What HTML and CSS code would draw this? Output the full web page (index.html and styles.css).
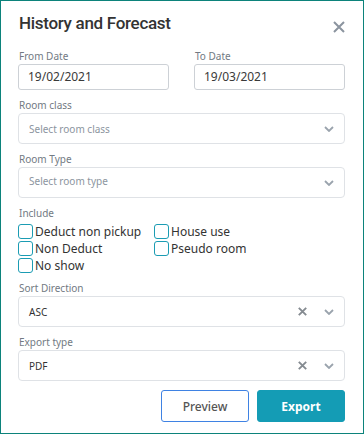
FILE: index.html
```html
<!DOCTYPE html>
<html>
<head>
<meta charset="utf-8">
<link rel="stylesheet" href="styles.css">
</head>
<body>
<div class="modal">
  <div class="header">
    <h1 class="title">History and Forecast</h1>
    <svg class="close" width="12" height="12" viewBox="0 0 12 12"><path d="M1 1L11 11M11 1L1 11" stroke="#8b949f" stroke-width="2" fill="none"/></svg>
  </div>
  <div class="row2">
    <div class="field">
      <label class="label">From Date</label>
      <div class="input">19/02/2021</div>
    </div>
    <div class="field">
      <label class="label">To Date</label>
      <div class="input">19/03/2021</div>
    </div>
  </div>
  <div class="field">
    <label class="label">Room class</label>
    <div class="select"><span class="ph">Select room class</span>
      <svg class="chev" width="10" height="6" viewBox="0 0 10 6"><path d="M1 1L5 5L9 1" stroke="#9aa3ad" stroke-width="1.8" fill="none"/></svg>
    </div>
  </div>
  <div class="field">
    <label class="label">Room Type</label>
    <div class="select"><span class="ph up">Select room type</span>
      <svg class="chev" width="10" height="6" viewBox="0 0 10 6"><path d="M1 1L5 5L9 1" stroke="#9aa3ad" stroke-width="1.8" fill="none"/></svg>
    </div>
  </div>
  <div class="field">
    <label class="label">Include</label>
    <div class="checks">
      <div class="check"><span class="box"></span>Deduct non pickup</div>
      <div class="check"><span class="box"></span>House use</div>
      <div class="check"><span class="box"></span>Non Deduct</div>
      <div class="check"><span class="box"></span>Pseudo room</div>
      <div class="check"><span class="box"></span>No show</div>
    </div>
  </div>
  <div class="field">
    <label class="label">Sort Direction</label>
    <div class="select"><span class="val">ASC</span>
      <svg class="clr" width="9" height="9" viewBox="0 0 9 9"><path d="M0.8 0.8L8.2 8.2M8.2 0.8L0.8 8.2" stroke="#858b91" stroke-width="1.9" fill="none"/></svg>
      <svg class="chev" width="10" height="6" viewBox="0 0 10 6"><path d="M1 1L5 5L9 1" stroke="#9aa3ad" stroke-width="1.8" fill="none"/></svg>
    </div>
  </div>
  <div class="field">
    <label class="label">Export type</label>
    <div class="select"><span class="val">PDF</span>
      <svg class="clr" width="9" height="9" viewBox="0 0 9 9"><path d="M0.8 0.8L8.2 8.2M8.2 0.8L0.8 8.2" stroke="#858b91" stroke-width="1.9" fill="none"/></svg>
      <svg class="chev" width="10" height="6" viewBox="0 0 10 6"><path d="M1 1L5 5L9 1" stroke="#9aa3ad" stroke-width="1.8" fill="none"/></svg>
    </div>
  </div>
  <div class="actions">
    <button class="btn preview">Preview</button>
    <button class="btn export">Export</button>
  </div>
</div>
</body>
</html>
```
FILE: styles.css
```css
* { box-sizing: border-box; }
html, body { margin: 0; padding: 0; background: #fff; }
body { font-family: "Noto Sans", "Open Sans", sans-serif; color: #333; }
.modal {
  width: 364px; height: 434px;
  border: 1px solid #0c837b;
  padding: 0 18px 0 17px;
  display: flex; flex-direction: column;
}
.header {
  display: flex; justify-content: space-between; align-items: flex-start;
  height: 48px;
}
.title {
  margin: 10px 0 0 1px; font-family: Roboto, "Noto Sans", sans-serif;
  font-size: 17px; font-weight: 500; color: #333;
  line-height: 24px; letter-spacing: -0.3px;
}
.close { margin-top: 20px; margin-right: 0; }
.row2 { display: grid; grid-template-columns: 1fr 1fr; column-gap: 25px; }
.field { display: flex; flex-direction: column; margin-bottom: 8px; }
.label {
  font-size: 10px; line-height: 15px; color: #727a83; padding-left: 1px;
}
.input {
  height: 26px; border: 1px solid #cdd1d6; border-radius: 3px;
  font-size: 12px; line-height: 24px; padding-left: 9px; color: #3a3a3a;
}
.select {
  height: 31px; border: 1px solid #dfe2e6; border-radius: 4px;
  display: flex; align-items: center; padding: 0 10px 0 10px;
  font-size: 10px;
}
.ph { color: #8c95a0; flex: 1; }
.ph.up { margin-top: -4px; }
.val { color: #333; flex: 1; }
.clr { margin-right: 17px; }
.chev { margin-top: 1px; }
.checks {
  display: grid; grid-template-columns: 136px auto; row-gap: 3px;
  margin-top: 3px; margin-bottom: 1px;
}
.check {
  display: flex; align-items: center; font-size: 12px; color: #333; height: 14px;
}
.box {
  width: 15px; height: 15px; border: 1px solid #1b9cb3; border-radius: 3px;
  margin-right: 2px; flex: none;
}
.actions {
  display: flex; justify-content: flex-end; gap: 8px; margin-top: 1px;
}
.btn {
  width: 88px; height: 32px; border-radius: 3px; font-family: inherit;
  font-size: 12px; cursor: pointer;
}
.preview { background: #fff; border: 1px solid #3f82e3; color: #555; font-weight: 500; }
.export { background: #149cb5; border: 1px solid #149cb5; color: #fff; font-weight: 700; }
```
